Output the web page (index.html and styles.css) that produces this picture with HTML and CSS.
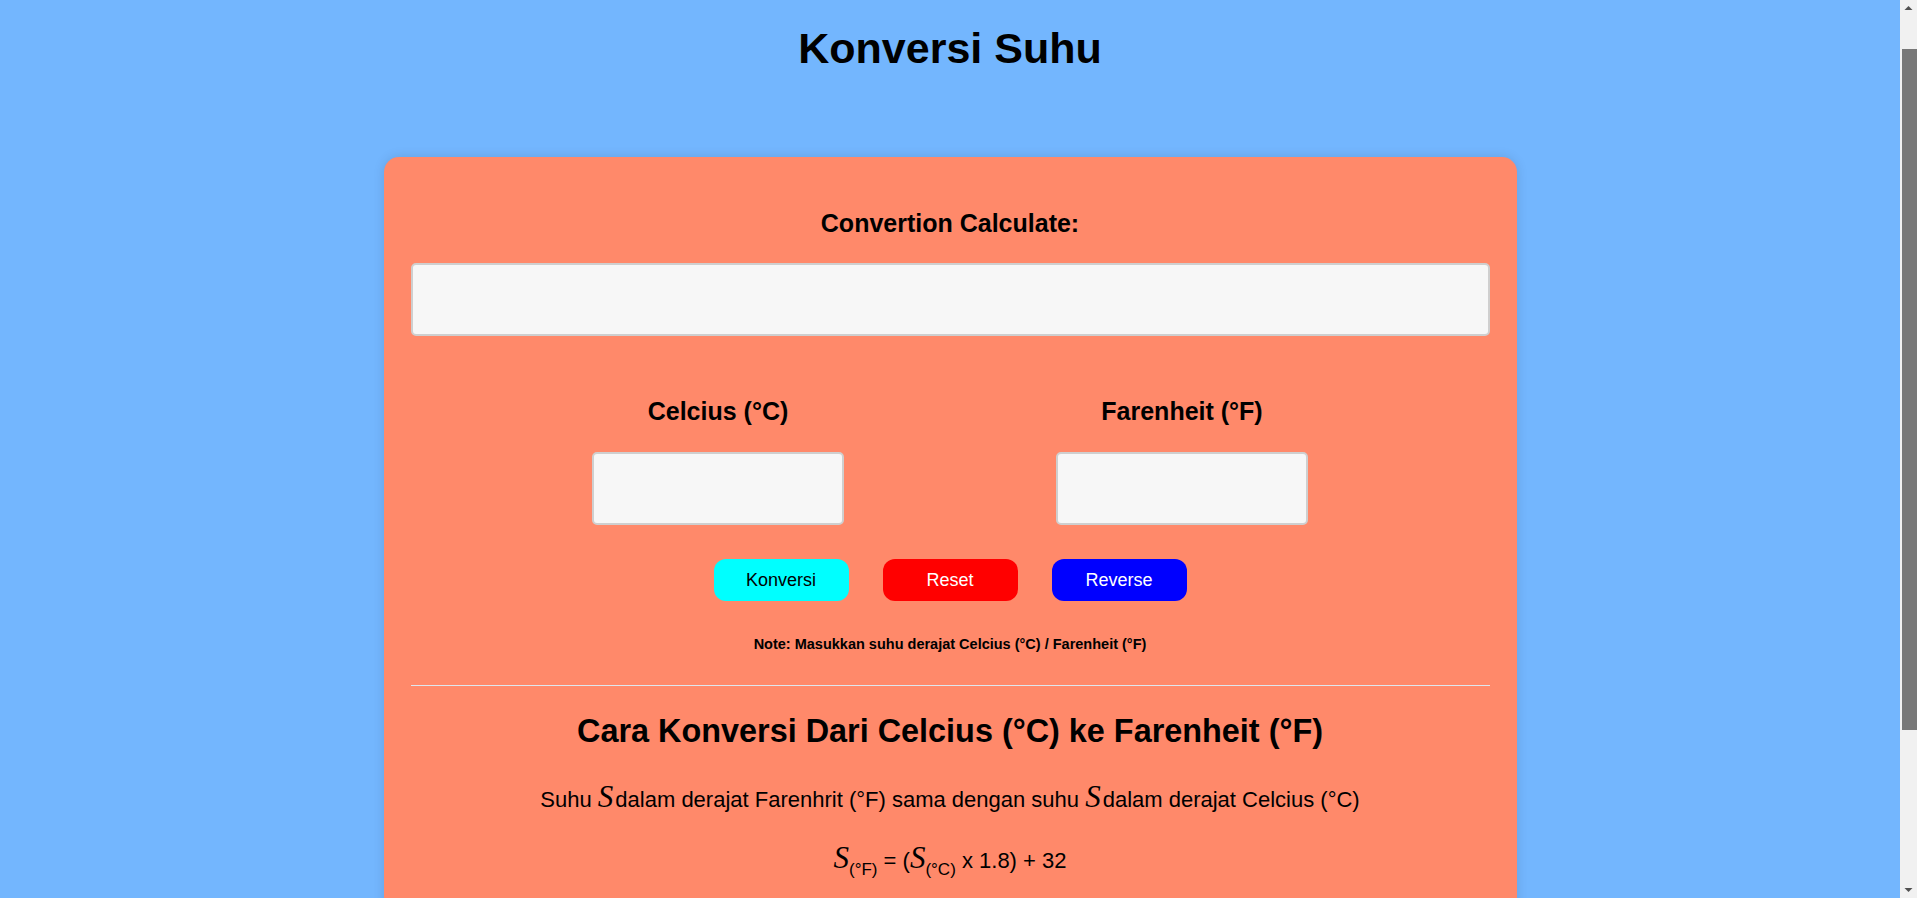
FILE: index.html
```html
<!DOCTYPE html>
<html lang="id">
<head>
<meta charset="utf-8">
<title>Konversi Suhu</title>
<link rel="stylesheet" href="styles.css">
</head>
<body>
<h1 class="title">Konversi Suhu</h1>
<main class="card">
  <h2 class="label label-main">Convertion Calculate:</h2>
  <input class="field field-wide" type="text">
  <div class="units">
    <div class="unit">
      <h3 class="label">Celcius (°C)</h3>
      <input class="field field-small" type="text">
    </div>
    <div class="unit">
      <h3 class="label">Farenheit (°F)</h3>
      <input class="field field-small" type="text">
    </div>
  </div>
  <div class="actions">
    <button class="btn btn-convert" type="button">Konversi</button>
    <button class="btn btn-reset" type="button">Reset</button>
    <button class="btn btn-reverse" type="button">Reverse</button>
  </div>
  <p class="note">Note: Masukkan suhu derajat Celcius (°C) / Farenheit (°F)</p>
  <hr class="divider">
  <section class="explain">
    <h2 class="explain-title">Cara Konversi Dari Celcius (°C) ke Farenheit (°F)</h2>
    <p class="explain-text">Suhu <i class="sym">S</i>dalam derajat Farenhrit (°F) sama dengan suhu <i class="sym">S</i>dalam derajat Celcius (°C)</p>
    <p class="formula"><i class="sym">S</i><sub>(°F)</sub> = (<i class="sym">S</i><sub>(°C)</sub> x 1.8) + 32</p>
    <p class="explain-text">atau</p>
    <p class="formula"><i class="sym">S</i><sub>(°F)</sub> = (<i class="sym">S</i><sub>(°C)</sub> x 9/5) + 32</p>
  </section>
</main>
<div class="scrollbar" aria-hidden="true">
  <svg class="arrow arrow-up" width="17" height="17" viewBox="0 0 17 17"><path d="M4.5 10 L8.5 6 L12.5 10 Z" fill="#505050"/></svg>
  <div class="track"><div class="thumb"></div></div>
  <svg class="arrow arrow-down" width="17" height="17" viewBox="0 0 17 17"><path d="M4.5 7 L8.5 11 L12.5 7 Z" fill="#505050"/></svg>
</div>
</body>
</html>
```
FILE: styles.css
```css
html, body {
  margin: 0;
  padding: 0;
}

body {
  background: #73b6fe;
  font-family: "Liberation Sans", Arial, sans-serif;
  color: #000;
  padding: 23px 17px 40px 0;
}

.title {
  margin: 0;
  text-align: center;
  font-size: 43px;
  line-height: 50px;
  font-weight: bold;
}

.card {
  width: 1133px;
  box-sizing: border-box;
  margin: 84px auto 0;
  padding: 51px 27px 120px;
  background: #ff896a;
  border-radius: 15px;
  box-shadow: 0 0 12px rgba(0, 0, 0, 0.12);
  display: flex;
  flex-direction: column;
  align-items: center;
}

.label {
  margin: 0;
  font-size: 25px;
  line-height: 30px;
  font-weight: bold;
  text-align: center;
}

.field {
  box-sizing: border-box;
  height: 73px;
  background: #f7f7f7;
  border: 2px solid #cfcfcf;
  border-radius: 5px;
  outline: none;
  font-family: inherit;
  font-size: 18px;
  padding: 0 10px;
}

.field-wide {
  width: 100%;
  margin-top: 25px;
}

.units {
  display: flex;
  justify-content: center;
  gap: 212px;
  margin-top: 60px;
}

.unit {
  display: flex;
  flex-direction: column;
  align-items: center;
  gap: 26px;
}

.field-small {
  width: 252px;
}

.actions {
  display: flex;
  justify-content: center;
  gap: 34px;
  margin-top: 34px;
}

.btn {
  width: 135px;
  height: 42px;
  border: none;
  border-radius: 12px;
  font-family: "Liberation Sans", Arial, sans-serif;
  font-size: 18px;
  padding: 0;
  cursor: pointer;
}

.btn-convert {
  background: #00ffff;
  color: #000;
}

.btn-reset {
  background: #ff0000;
  color: #fff;
}

.btn-reverse {
  background: #0000ff;
  color: #fff;
}

.note {
  margin: 35px 0 0;
  font-size: 14.5px;
  line-height: 17px;
  font-weight: bold;
  text-align: center;
}

.divider {
  width: 100%;
  margin: 32px 0 0;
  border: none;
  border-top: 1px solid #dfe6ee;
  height: 0;
}

.explain {
  width: 100%;
  display: flex;
  flex-direction: column;
  align-items: center;
}

.explain-title {
  margin: 27px 0 0;
  font-size: 32.4px;
  line-height: 37px;
  font-weight: bold;
  text-align: center;
}

.explain-text {
  margin: 32px 0 0;
  font-size: 22px;
  line-height: 30px;
  text-align: center;
}

.formula {
  margin: 28px 0 0;
  font-size: 22px;
  line-height: 30px;
  text-align: center;
}

.sym {
  font-family: "Liberation Serif", "Times New Roman", serif;
  font-style: italic;
  font-size: 31px;
  margin-right: 2px;
}

.formula .sym {
  margin-right: 0;
}

.formula sub {
  font-size: 17px;
  vertical-align: -7px;
  line-height: 0;
}

.scrollbar {
  position: fixed;
  top: 0;
  right: 0;
  width: 17px;
  height: 100vh;
  background: #f1f1f1;
  display: flex;
  flex-direction: column;
}

.arrow {
  display: block;
  flex: none;
}

.track {
  flex: 1;
  display: flex;
  flex-direction: column;
  padding: 32px 0 0 2px;
}

.thumb {
  height: 681px;
  background: #787878;
}
```
